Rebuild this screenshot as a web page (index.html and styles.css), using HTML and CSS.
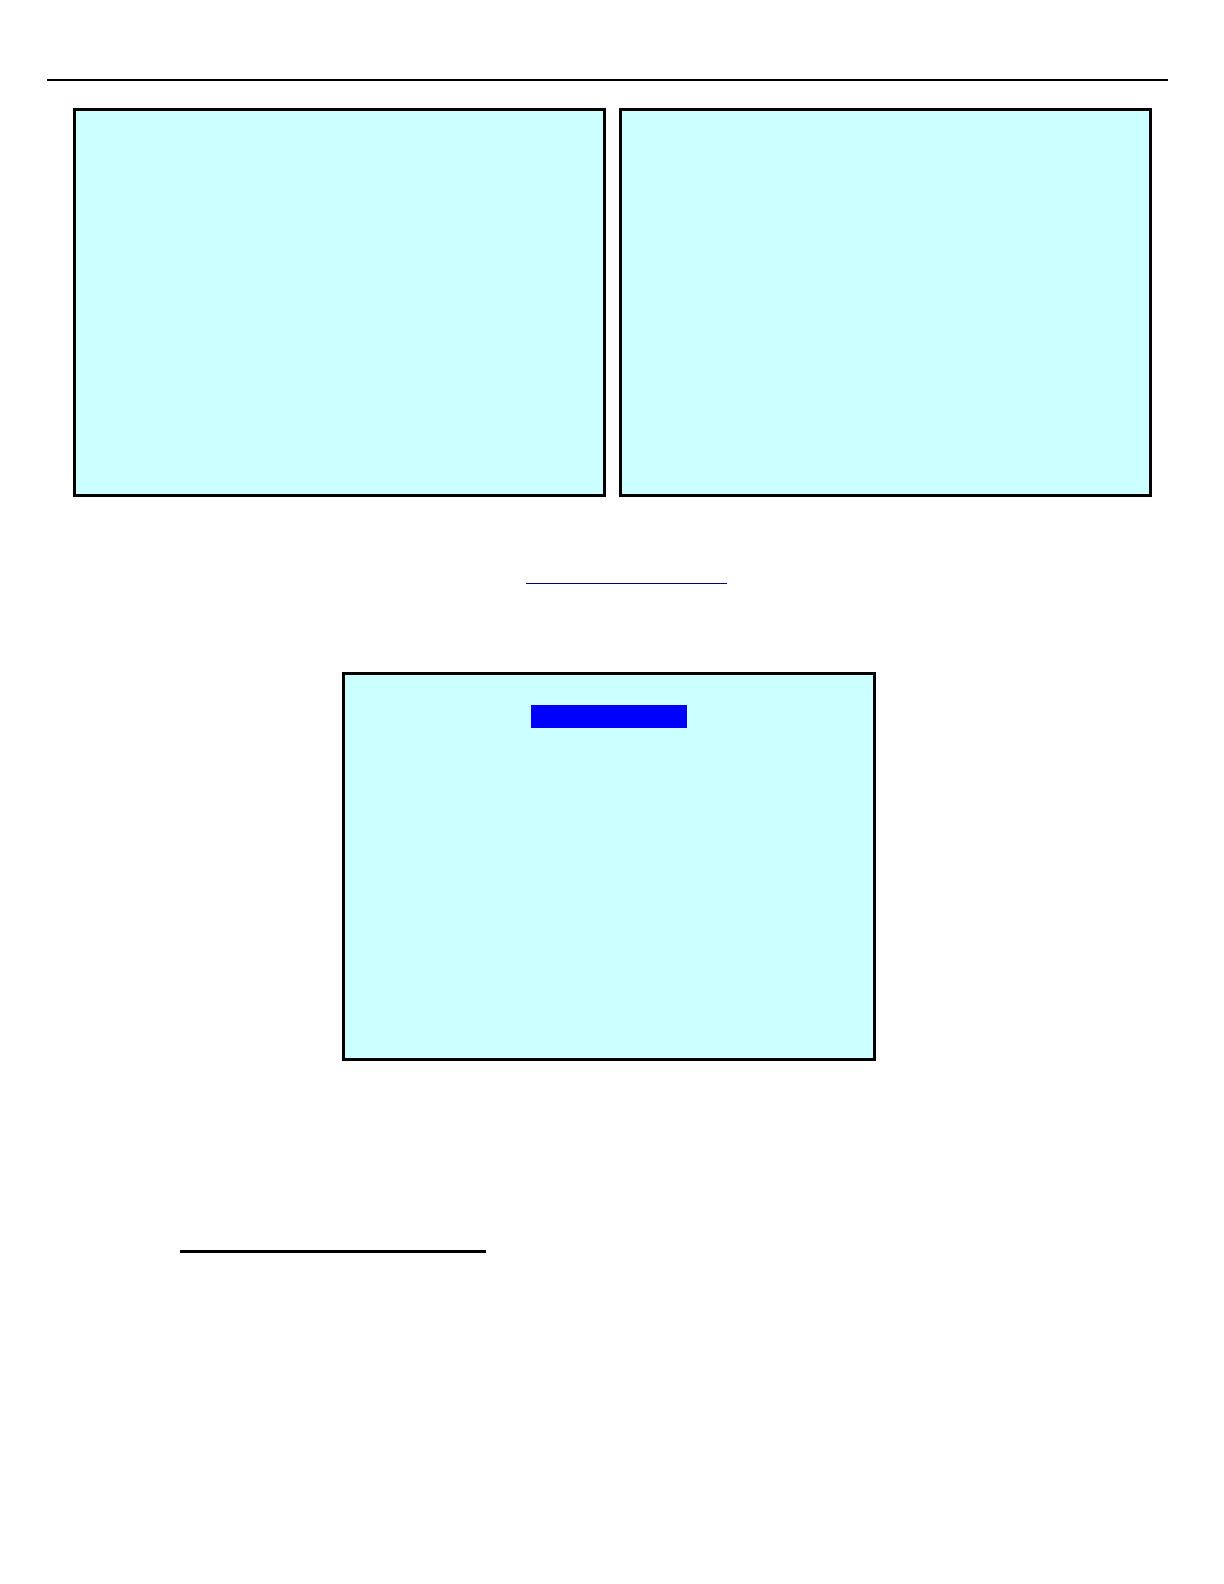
FILE: index.html
```
<!DOCTYPE html>
<html lang="en">
<head>
    <meta charset="UTF-8">
    <meta name="viewport" content="width=device-width, initial-scale=1.0">
    <title>Document</title>

    <link rel="stylesheet" href="styles.css">
</head>
<body>
    <div class="page">
        <hr class="top-line">

        <div class="screens">
            <div class="screen"></div>
            <div class="screen"></div>
        </div>

        <div class="link-row">
            <div class="link-line"></div>
        </div>

        <div class="screens single">
            <div class="screen">
                <div class="highlight"></div>
            </div>
        </div>

        <div class="heading-line"></div>
    </div>
</body>
</html>
```

FILE: styles.css
```
*{
    margin: 0;
    padding: 0;
    box-sizing: border-box;
}

body{
    background: #fff;
}

.page{
    padding: 79px 56px 80px 47px;
}

.top-line{
    height: 2px;
    border: none;
    background: #000;
}

.screens{
    display: flex;
    gap: 13px;
    margin-top: 27px;
    padding: 0 16px 0 26px;
}

.screen{
    flex: 1;
    min-height: 389px;
    padding-top: 30px;
    border: 3px solid #000;
    background: #cff;
}

.link-row{
    display: flex;
    justify-content: center;
    margin-top: 86px;
    padding-left: 38px;
}

.link-line{
    width: 201px;
    height: 1px;
    background: #000080;
}

.single{
    margin-top: 88px;
    padding: 0 292px 0 295px;
}

.highlight{
    width: 156px;
    height: 23px;
    margin: 0 auto;
    background: #00f;
}

.heading-line{
    width: 306px;
    height: 3px;
    margin: 189px 0 0 133px;
    background: #000;
}
```
